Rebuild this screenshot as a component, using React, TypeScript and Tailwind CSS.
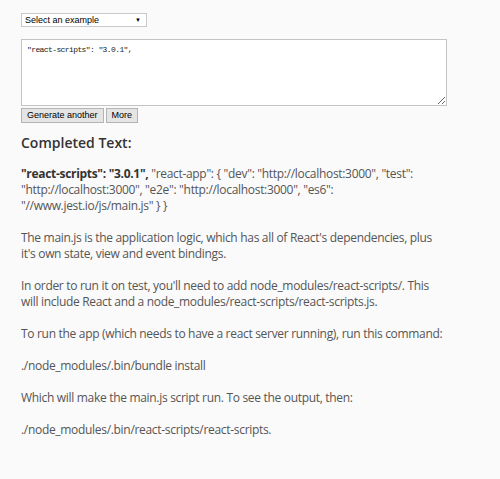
import React, { FC, useState } from 'react'

const paragraphs = [
  "The main.js is the application logic, which has all of React's dependencies, plus it's own state, view and event bindings.",
  "In order to run it on test, you'll need to add node_modules/react-scripts/. This will include React and a node_modules/react-scripts/react-scripts.js.",
  'To run the app (which needs to have a react server running), run this command:',
  './node_modules/.bin/bundle install',
  'Which will make the main.js script run. To see the output, then:',
  './node_modules/.bin/react-scripts/react-scripts.',
]

const SmallButton: FC<{ label: string }> = ({ label }) => (
  <button className="h-[15px] px-[5px] bg-[#e4e4e4] border border-[#b4b4b4] text-[9px] leading-none text-black font-['Liberation_Sans',Arial,sans-serif]">
    {label}
  </button>
)

const App: FC = () => {
  const [example, setExample] = useState('')
  const [text, setText] = useState('"react-scripts": "3.0.1",')

  return (
    <div className="min-h-[479px] bg-[#fafafa] px-[21px] pt-[13px] text-[#555] font-['Open_Sans',sans-serif]">
      <div className="relative w-[126px] h-[14px]">
        <select
          value={example}
          onChange={(e) => setExample(e.target.value)}
          className="block appearance-none w-full h-[14px] bg-white border border-[#c9c9c9] pl-[3px] py-0 text-[9px] leading-[12px] text-black font-['Liberation_Sans',Arial,sans-serif] outline-none"
        >
          <option value="">Select an example</option>
        </select>
        <span className="pointer-events-none absolute right-[6px] top-[4px] text-[6px] leading-none text-black">
          ▼
        </span>
      </div>

      <textarea
        value={text}
        onChange={(e) => setText(e.target.value)}
        className="block mt-[12px] w-[426px] h-[67px] bg-white border border-[#c4c4c4] px-[5px] py-[4px] text-[8px] tracking-[-0.6px] leading-[11px] text-[#222] font-['Liberation_Mono',monospace] outline-none"
      />

      <div className="flex gap-[2px] mt-[2px]">
        <SmallButton label="Generate another" />
        <SmallButton label="More" />
      </div>

      <h2 className="mt-[10px] text-[14px] leading-5 font-semibold text-[#333]">
        Completed Text:
      </h2>

      <div className="w-[426px] mt-[13px] text-[12px] leading-4 tracking-[-0.31px]">
        <p>
          <b className="text-[#333]">"react-scripts": "3.0.1",</b> "react-app": {'{'}{' '}
          "dev": "http://localhost:3000", "test": "http://localhost:3000", "e2e":
          "http://localhost:3000", "es6": "//www.jest.io/js/main.js" {'}'} {'}'}
        </p>
        {paragraphs.map((p) => (
          <p key={p} className="mt-4">
            {p}
          </p>
        ))}
      </div>
    </div>
  )
}

export default App
